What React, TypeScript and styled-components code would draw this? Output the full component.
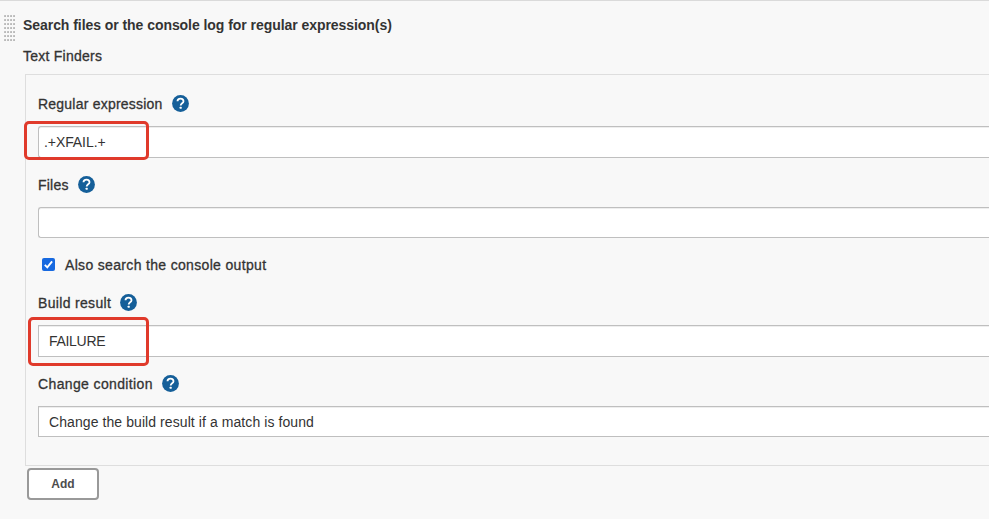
import React from "react";
import styled, { createGlobalStyle } from "styled-components";

const GlobalStyle = createGlobalStyle`
  *, *::before, *::after { box-sizing: border-box; }
  body { margin: 0; background: #f8f8f8; overflow: hidden; }
`;

const Page = styled.main`
  position: relative;
  width: 100%;
  height: 519px;
  overflow: hidden;
  background: #f8f8f8;
  border-top: 1px solid #dadada;
  color: #333;
  font: 14px/20px "Liberation Sans", Arial, sans-serif;
  white-space: nowrap;
`;

const Header = styled.header`
  display: flex;
  height: 45px;
  padding: 14px 0 0 4px;
`;

const Grip = styled.svg`
  flex: none;
  width: 12px;
  height: 26px;
  margin-right: 7px;
`;

const Title = styled.h1<{ $spacing: number }>`
  margin: 0;
  font-size: 14px;
  line-height: 20px;
  letter-spacing: ${(p) => p.$spacing}px;
`;

const Label = styled.span<{ $spacing?: number }>`
  letter-spacing: ${(p) => p.$spacing ?? 0.22}px;
  -webkit-text-stroke: 0.3px #333;
`;

const Subtitle = styled.div`
  height: 28px;
  padding-left: 23px;
`;

const Panel = styled.section`
  height: 392px;
  margin-left: 25px;
  padding: 19px 0 0 12px;
  border: 1px solid #dedede;
  border-right: 0;
`;

const Field = styled.div<{ $height: number }>`
  height: ${(p) => p.$height}px;
`;

const LabelRow = styled.div<{ $height: number }>`
  display: flex;
  align-items: flex-start;
  gap: 9px;
  height: ${(p) => p.$height}px;
`;

const HelpSvg = styled.svg`
  flex: none;
  width: 17px;
  height: 17px;
  margin-top: 0.5px;
`;

const Control = styled.div<{ $height: number; $indent?: number; $select?: boolean }>`
  display: flex;
  align-items: center;
  height: ${(p) => p.$height}px;
  padding-left: ${(p) => p.$indent ?? 10}px;
  border: 1px solid #bfbfbf;
  border-right: 0;
  border-radius: ${(p) => (p.$select ? "0" : "3px 0 0 3px")};
  background: #fff;
  box-shadow: inset 0 1px 0 #eee;
`;

const Value = styled.span<{ $spacing: number }>`
  letter-spacing: ${(p) => p.$spacing}px;
`;

const CheckRow = styled.label`
  display: flex;
  align-items: flex-start;
  gap: 10px;
  height: 38px;
  padding-left: 4px;
`;

const CheckSvg = styled.svg`
  flex: none;
  width: 13px;
  height: 13px;
  margin-top: 3px;
`;

const AddButton = styled.button`
  display: block;
  width: 72px;
  height: 32px;
  margin: 2px 0 0 27px;
  padding: 0;
  border: 2px solid #999;
  border-radius: 4px;
  background: #fff;
  color: #4d4d4d;
  font: bold 12px "Liberation Sans", Arial, sans-serif;
`;

const Highlight = styled.div<{ $x: number; $y: number; $w: number; $h: number }>`
  position: absolute;
  left: ${(p) => p.$x}px;
  top: ${(p) => p.$y}px;
  width: ${(p) => p.$w}px;
  height: ${(p) => p.$h}px;
  border: 3px solid #e03a2b;
  border-radius: 5px;
`;

const HelpIcon = () => (
  <HelpSvg viewBox="0 0 17 17" role="img" aria-label="Help">
    <circle cx="8.5" cy="8.5" r="8.4" fill="#155f99" />
    <path d="M5.5 6.3C5.5 4.5 6.8 3.6 8.5 3.6s3 1 3 2.6c0 2-2.8 2.2-2.8 4.3" fill="none" stroke="#fff" strokeWidth="1.8" />
    <rect x="7.7" y="11.8" width="2" height="2" rx=".4" fill="#fff" />
  </HelpSvg>
);

const dots = Array.from({ length: 7 }, (_, row) => [0, 1, 2, 3].map((col) => [col * 3, row * 4])).flat();

export default function App() {
  return (
    <Page>
      <GlobalStyle />
      <Header>
        <Grip viewBox="0 0 12 26">
          {dots.map(([x, y]) => (
            <rect key={`${x}-${y}`} x={x + 0.2} y={y + 0.2} width="1.7" height="1.7" fill="#aaa" />
          ))}
        </Grip>
        <Title $spacing={-0.055}>Search files or the console log for regular expression(s)</Title>
      </Header>
      <Subtitle>
        <Label $spacing={0.25}>Text Finders</Label>
      </Subtitle>
      <Panel>
        <Field $height={81}>
          <LabelRow $height={32}>
            <Label>Regular expression</Label>
            <HelpIcon />
          </LabelRow>
          <Control $height={32} $indent={5}>
            <Value $spacing={-0.08}>.+XFAIL.+</Value>
          </Control>
        </Field>
        <Field $height={80}>
          <LabelRow $height={32}>
            <Label>Files</Label>
            <HelpIcon />
          </LabelRow>
          <Control $height={31} />
        </Field>
        <CheckRow>
          <CheckSvg viewBox="0 0 13 13">
            <rect width="13" height="13" rx="2" fill="#1769e0" />
            <path d="m2.8 6.8 2.5 2.5 4.8-6" fill="none" stroke="#fff" strokeWidth="1.9" />
          </CheckSvg>
          <Label $spacing={0.33}>Also search the console output</Label>
        </CheckRow>
        <Field $height={81}>
          <LabelRow $height={32}>
            <Label $spacing={0.33}>Build result</Label>
            <HelpIcon />
          </LabelRow>
          <Control $height={32} $select>
            <Value $spacing={-0.3}>FAILURE</Value>
          </Control>
        </Field>
        <Field $height={63}>
          <LabelRow $height={32}>
            <Label $spacing={0.37}>Change condition</Label>
            <HelpIcon />
          </LabelRow>
          <Control $height={31} $select>
            <Value $spacing={0.08}>Change the build result if a match is found</Value>
          </Control>
        </Field>
      </Panel>
      <AddButton type="button">Add</AddButton>
      <Highlight $x={24} $y={120} $w={125} $h={39} />
      <Highlight $x={28} $y={316} $w={121} $h={49} />
    </Page>
  );
}
